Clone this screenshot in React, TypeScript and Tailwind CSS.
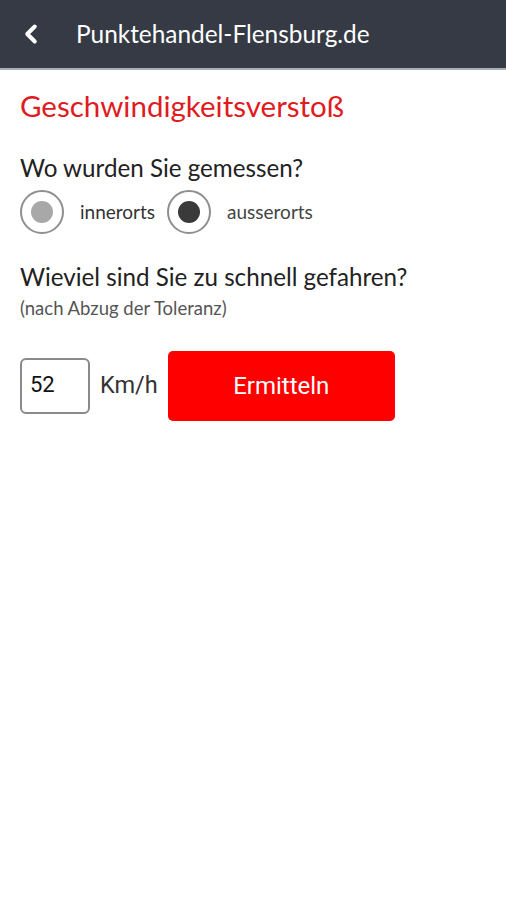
import { ChevronLeft } from "lucide-react"

export default function App() {
  return (
    <div className="min-h-[900px] w-[506px] bg-white font-['Lato',sans-serif]">
      <header className="flex h-[70px] items-center border-b-2 border-[#a9adb4] bg-[#353a45] text-white">
        <ChevronLeft size={30} strokeWidth={3.2} className="ml-[16px]" />
        <h1 className="ml-[30px] text-[24.4px] leading-8">Punktehandel-Flensburg.de</h1>
      </header>

      <main className="px-5 pt-[20px]">
        <h2 className="text-[29.5px] leading-8 text-[#e01b22]">Geschwindigkeitsverstoß</h2>

        <p className="mt-[31px] text-[24.2px] leading-[30px] text-[#222]">Wo wurden Sie gemessen?</p>
        <div className="mt-[7px] flex items-center">
          <span className="flex h-[44px] w-[44px] items-center justify-center rounded-full border-2 border-[#8f8f8f]">
            <span className="h-[22px] w-[22px] rounded-full bg-[#a8a8a8]" />
          </span>
          <span className="ml-[16px] text-[19px] text-[#333]">innerorts</span>
          <span className="ml-[12px] flex h-[44px] w-[44px] items-center justify-center rounded-full border-2 border-[#8f8f8f]">
            <span className="h-[22px] w-[22px] rounded-full bg-[#3a3a3a]" />
          </span>
          <span className="ml-[16px] text-[19px] text-[#444]">ausserorts</span>
        </div>

        <p className="mt-[28px] text-[24.2px] leading-[30px] text-[#222]">Wieviel sind Sie zu schnell gefahren?</p>
        <p className="mt-[4px] text-[18.5px] leading-6 text-[#555]">(nach Abzug der Toleranz)</p>

        <div className="mt-[31px] flex items-center font-['Roboto',sans-serif]">
          <div className="flex h-[56px] w-[70px] items-center rounded-[6px] border-2 border-[#8a8a8a] pb-[3px] pl-[8px] text-[22px] text-[#111]">
            52
          </div>
          <span className="ml-[10px] text-[23.5px] text-[#333]">Km/h</span>
          <button className="ml-[10px] h-[70px] w-[227px] rounded-[5px] bg-[#ff0000] text-[24px] text-white">
            Ermitteln
          </button>
        </div>
      </main>
    </div>
  )
}
